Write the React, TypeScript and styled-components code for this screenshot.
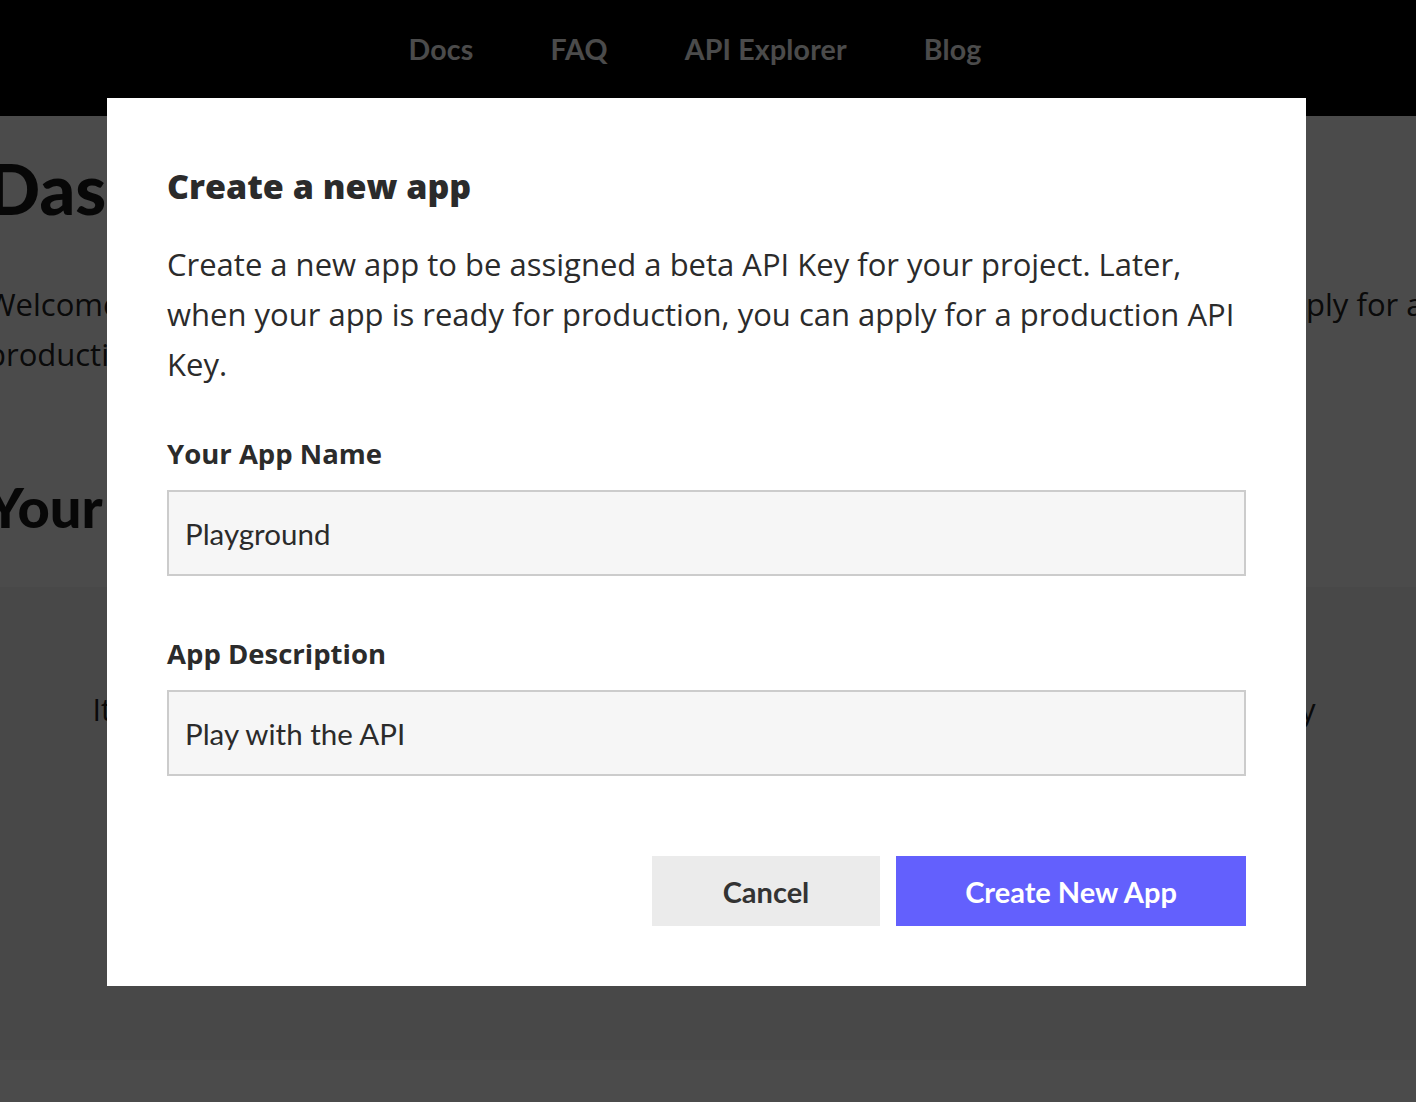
import React from 'react'
import styled, { createGlobalStyle } from 'styled-components'

const GlobalStyle = createGlobalStyle`
  html, body {
    margin: 0;
    padding: 0;
    background: #ffffff;
    font-family: "Open Sans", "Noto Sans", sans-serif;
    color: #333333;
    overflow: hidden;
  }
  * { box-sizing: border-box; }
`

const Page = styled.div`
  width: 1416px;
  height: 1102px;
  overflow: hidden;
  position: relative;
  background: #ffffff;
`

const Header = styled.header`
  height: 116px;
  background: #000000;
  display: flex;
  justify-content: center;
  align-items: flex-start;
  padding: 32px 26px 0 0;
  gap: 77px;
`

const NavItem = styled.a`
  font-family: Lato, sans-serif;
  font-weight: 700;
  font-size: 28.5px;
  color: #ffffff;
  text-decoration: none;
  letter-spacing: 0.2px;
`

const Content = styled.main`
  margin-left: -13px;
  width: 1700px;
  padding-top: 30px;
`

const PageTitle = styled.h1`
  margin: 0;
  font-family: Lato, sans-serif;
  font-size: 70px;
  font-weight: 900;
  line-height: 84px;
  color: #1a1a1a;
`

const Intro = styled.p`
  margin: 49px 0 0;
  font-size: 31px;
  line-height: 50px;
  color: #222222;
  white-space: nowrap;
`

const SectionTitle = styled.h2`
  margin: 96px 0 0;
  font-family: Lato, sans-serif;
  font-size: 56px;
  font-weight: 900;
  line-height: 64px;
  color: #1a1a1a;
`

const EmptyCard = styled.div`
  margin: 48px 0 0 13px;
  width: 1416px;
  height: 473px;
  background: #f5f5f5;
  display: flex;
  justify-content: center;
  padding: 102px 8px 0 0;
`

const EmptyText = styled.p`
  margin: 0;
  font-size: 30.5px;
  line-height: 40px;
  color: #222222;
  white-space: nowrap;
`

const Overlay = styled.div`
  position: absolute;
  inset: 0;
  background: rgba(0, 0, 0, 0.705);
  display: flex;
  align-items: flex-start;
`

const Modal = styled.div`
  margin: 98px 0 0 107px;
  width: 1199px;
  height: 888px;
  background: #ffffff;
  padding: 64px 60px 60px;
  display: flex;
  flex-direction: column;
`

const ModalTitle = styled.h3`
  margin: 0;
  font-size: 34px;
  font-weight: 800;
  line-height: 48px;
  color: #2b2b2b;
`

const ModalText = styled.p`
  margin: 29px 0 0;
  font-size: 31px;
  line-height: 50px;
  color: #2b2b2b;
`

const Field = styled.div<{ $top: number }>`
  margin-top: ${p => p.$top}px;
  display: flex;
  flex-direction: column;
`

const Label = styled.label`
  font-size: 27.5px;
  font-weight: 700;
  line-height: 40px;
  color: #2b2b2b;
`

const Input = styled.input`
  margin-top: 16px;
  height: 86px;
  width: 100%;
  border: 2px solid #cccccc;
  background: #f6f6f6;
  padding: 0 16px;
  font-family: Lato, sans-serif;
  font-size: 29.5px;
  color: #2b2b2b;
  outline: none;
`

const Actions = styled.div`
  margin-top: auto;
  display: flex;
  justify-content: flex-end;
  gap: 16px;
`

const Button = styled.button<{ $primary?: boolean; $w: number }>`
  width: ${p => p.$w}px;
  height: 70px;
  border: none;
  background: ${p => (p.$primary ? '#6360fd' : '#ebebeb')};
  color: ${p => (p.$primary ? '#ffffff' : '#333333')};
  font-family: Lato, sans-serif;
  font-weight: 700;
  font-size: 29px;
  cursor: pointer;
`

const App = () => {
  return (
    <>
      <GlobalStyle />
      <Page>
        <Header>
          <NavItem href="#">Docs</NavItem>
          <NavItem href="#">FAQ</NavItem>
          <NavItem href="#">API Explorer</NavItem>
          <NavItem href="#">Blog</NavItem>
        </Header>
        <Content>
          <PageTitle>Dashboard</PageTitle>
          <Intro>
            Welcome to your API dashboard. Here you can manage your apps and keys, and you can apply for a
            <br />
            production API Key once your app is ready.
          </Intro>
          <SectionTitle>Your Apps</SectionTitle>
          <EmptyCard>
            <EmptyText>It looks like you have not created any apps yet. Create a new app to get started quickly</EmptyText>
          </EmptyCard>
        </Content>
        <Overlay>
          <Modal>
            <ModalTitle>Create a new app</ModalTitle>
            <ModalText>
              Create a new app to be assigned a beta API Key for your project. Later, when your app is ready for production,
              you can apply for a production API Key.
            </ModalText>
            <Field $top={45}>
              <Label>Your App Name</Label>
              <Input defaultValue="Playground" />
            </Field>
            <Field $top={58}>
              <Label>App Description</Label>
              <Input defaultValue="Play with the API" />
            </Field>
            <Actions>
              <Button $w={228}>Cancel</Button>
              <Button $w={350} $primary>
                Create New App
              </Button>
            </Actions>
          </Modal>
        </Overlay>
      </Page>
    </>
  )
}

export default App
